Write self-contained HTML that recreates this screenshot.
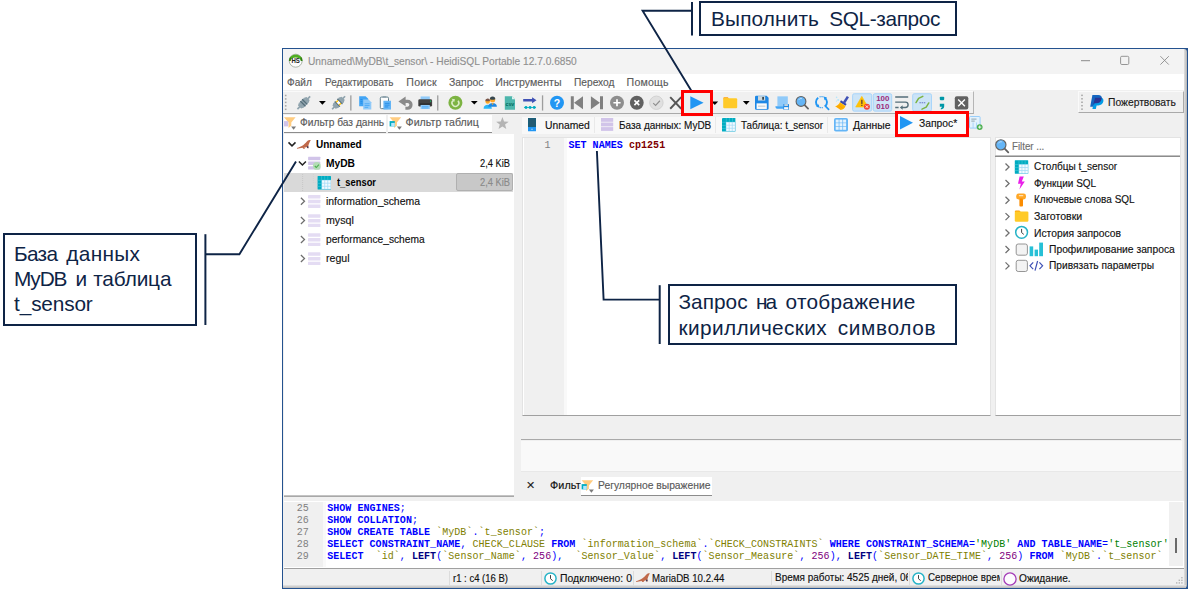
<!DOCTYPE html>
<html lang="ru"><head><meta charset="utf-8"><title>HeidiSQL</title>
<style>
html,body{margin:0;padding:0;background:#fff;}
body{width:1188px;height:589px;position:relative;overflow:hidden;font-family:"Liberation Sans",sans-serif;}
.b,.t,.i,.g{position:absolute;box-sizing:border-box;}
.g{left:0;top:0;width:0;height:0;}
.t{white-space:pre;margin:0;padding:0;font-weight:normal;transform-origin:0 50%;}
.i{overflow:visible;}
.window .r{-webkit-text-stroke:0.15px currentColor;}
</style></head>
<body>
<div class="g window">
<div class="b frame" style="left:282px;top:48px;width:906px;height:541px;background:#24528f;"></div>
<div class="b client" style="left:283px;top:49px;width:901px;height:538.5px;background:#f0f0f0;"></div>
<div class="b shadow" style="left:1184px;top:49px;width:3px;height:538.5px;background:linear-gradient(90deg,#e0e0e0,#b4b4b4);border-radius:0 3px 3px 0;"></div>
<div class="b shadow" style="left:283px;top:585px;width:903px;height:2.5px;background:linear-gradient(180deg,#e6e6e6,#b8b8b8);"></div>
<div class="g titlebar">
<div class="b" style="left:283px;top:49px;width:901px;height:25px;background:#f3f3f3;border-radius:0 3px 0 0;"></div>
<svg class="i app" style="left:287.5px;top:52.5px" width="16" height="17" viewBox="287.5 52.5 16 17"><circle cx="295.2" cy="60.2" r="6.5" fill="#fdfdfd" stroke="#a3ada0" stroke-width="0.9"/><path d="M288.5 60.6A6.7 6.7 0 0 1 301.9 60.6L300.4 60.4A5.4 4.6 0 0 0 290.0 60.4Z" fill="#4fae1f"/><path d="M288.5 60.6A6.7 6.7 0 0 1 289.6 56.6L290.6 57.8A5.4 4.6 0 0 0 290.0 60.4Z" fill="#2f7d12"/><path d="M301.9 60.6A6.7 6.7 0 0 0 300.8 56.6L299.8 57.8A5.4 4.6 0 0 1 300.4 60.4Z" fill="#2f7d12"/><text x="295.2" y="62.8" font-size="6.6" font-weight="bold" text-anchor="middle" fill="#222" font-family="Liberation Sans,sans-serif" textLength="8.4" lengthAdjust="spacingAndGlyphs">HS</text></svg>
<span class="t r" style="left:307.80px;top:55.00px;font-size:10.9px;line-height:13px;color:#909090;transform:scaleX(0.9340);">Unnamed\MyDB\t_sensor\ - HeidiSQL Portable 12.7.0.6850</span>
<svg class="i winbtns" style="left:1075px;top:52px" width="100" height="18" viewBox="1075 52 100 18"><path d="M1081 60.7H1090" stroke="#8a8a8a" stroke-width="1" fill="none"/><rect x="1120.6" y="56.3" width="8.2" height="8.2" rx="1.2" stroke="#8a8a8a" stroke-width="0.9" fill="none"/><path d="M1160.4 56.2L1168.8 64.6M1168.8 56.2L1160.4 64.6" stroke="#8a8a8a" stroke-width="0.9" fill="none"/></svg>
</div>
<div class="g menubar">
<div class="b" style="left:283px;top:74px;width:901px;height:16.3px;background:#ffffff;"></div>
<span class="t r" style="left:287.40px;top:76.00px;font-size:10.6px;line-height:13px;color:#5c5c5c;transform:scaleX(0.9555);">Файл</span>
<span class="t r" style="left:325.20px;top:76.00px;font-size:10.6px;line-height:13px;color:#5c5c5c;transform:scaleX(0.9341);">Редактировать</span>
<span class="t r" style="left:406.30px;top:76.00px;font-size:10.6px;line-height:13px;color:#5c5c5c;letter-spacing:0.232px;">Поиск</span>
<span class="t r" style="left:448.70px;top:76.00px;font-size:10.6px;line-height:13px;color:#5c5c5c;transform:scaleX(0.9850);">Запрос</span>
<span class="t r" style="left:495.30px;top:76.00px;font-size:10.6px;line-height:13px;color:#5c5c5c;letter-spacing:0.020px;">Инструменты</span>
<span class="t r" style="left:573.50px;top:76.00px;font-size:10.6px;line-height:13px;color:#5c5c5c;transform:scaleX(0.9620);">Переход</span>
<span class="t r" style="left:626.60px;top:76.00px;font-size:10.6px;line-height:13px;color:#5c5c5c;letter-spacing:0.192px;">Помощь</span>
</div>
<div class="g toolbar">
<div class="b" style="left:283px;top:90.5px;width:690.5px;height:23.5px;background:#f0f0f0;border-bottom:1px solid #a9a9a9;border-right:1px solid #b5b5b5;border-top:1px solid #fafafa;"></div>
<svg class="i tbicons" style="left:284px;top:91.5px" width="689" height="22" viewBox="284 91.5 689 22"><g transform="translate(0 -0.35)"><rect x="284.9" y="94.60" width="1.6" height="1.5" fill="#a6a6a6"/><rect x="284.9" y="98.05" width="1.6" height="1.5" fill="#a6a6a6"/><rect x="284.9" y="101.50" width="1.6" height="1.5" fill="#a6a6a6"/><rect x="284.9" y="104.95" width="1.6" height="1.5" fill="#a6a6a6"/><rect x="284.9" y="108.40" width="1.6" height="1.5" fill="#a6a6a6"/><g transform="translate(303.8 102.6) rotate(45)"><rect x="-0.85" y="-9" width="1.7" height="18" fill="#90a4ae"/><path d="M-2.2 -6L2.2 -6L3.6 -3.2H-3.6Z" fill="#90a4ae"/><path d="M-2.2 6L2.2 6L3.6 3.2H-3.6Z" fill="#90a4ae"/><rect x="-3.3" y="-3.4" width="6.6" height="6.8" rx="0.8" fill="#90a4ae"/><rect x="-3.6" y="-1.9" width="7.2" height="1.3" fill="#546e7a"/><rect x="-3.6" y="0.6" width="7.2" height="1.3" fill="#546e7a"/></g><path d="M319.00 100.85H325.80L322.40 104.55Z" fill="#000"/><g transform="translate(338.6 102.6) rotate(45)"><rect x="-0.85" y="-9.2" width="1.7" height="4.4" fill="#90a4ae"/><rect x="-0.85" y="4.8" width="1.7" height="4.4" fill="#90a4ae"/><path d="M-2.2 -6.4L2.2 -6.4L3.6 -3.6H-3.6Z" fill="#90a4ae"/><path d="M-2.2 6.4L2.2 6.4L3.6 3.6H-3.6Z" fill="#90a4ae"/><rect x="-3.3" y="-4" width="6.6" height="2.4" fill="#90a4ae"/><rect x="-3.3" y="1.6" width="6.6" height="2.4" fill="#90a4ae"/><rect x="-3.6" y="-2.3" width="7.2" height="1.1" fill="#546e7a"/><rect x="-3.6" y="1.2" width="7.2" height="1.1" fill="#546e7a"/><rect x="-2.7" y="-1.2" width="1.5" height="2.4" fill="#ffc107"/><rect x="1.2" y="-1.2" width="1.5" height="2.4" fill="#ffc107"/><rect x="-1.2" y="-1.2" width="2.4" height="2.4" fill="#fff"/></g><rect x="350.20" y="95.2" width="1.3" height="15.2" fill="#9d9d9d"/><path d="M359.2 96h6.4l2.6 2.6v7.6h-9z" fill="#42a5f5"/><path d="M363.2 99.4h5.4l2.7 2.7v7.3h-8.1z" fill="#90caf9"/><path d="M364.6 103.6h5M364.6 105.4h5M364.6 107.2h3.6" stroke="#42a5f5" stroke-width="0.8"/><path d="M360.4 99.4h2M360.4 101.2h2M360.4 103h2" stroke="#1e88e5" stroke-width="0.8"/><rect x="380.3" y="96.9" width="8.2" height="11.6" rx="1.2" fill="#fdfdfd" stroke="#607d8b" stroke-width="1"/><rect x="382.6" y="95.9" width="3.6" height="1.8" rx="0.6" fill="#90a4ae"/><rect x="383.4" y="100.6" width="7.6" height="8.8" fill="#64b5f6"/><path d="M384.8 103.2h4.8M384.8 105h4.8M384.8 106.8h3.4" stroke="#1e88e5" stroke-width="0.8"/><path d="M398.4 101.3L405.6 96.4V106.2z" fill="#8a8a8a"/><path d="M404.6 101.3h3a3.4 3.4 0 0 1 0 6.8h-2.2" stroke="#8a8a8a" stroke-width="3.2" fill="none"/><rect x="420.6" y="96.3" width="9.2" height="3.4" fill="#90caf9"/><rect x="418.3" y="99.2" width="13.8" height="7.2" rx="1.4" fill="#424242"/><rect x="420.6" y="104.6" width="9.2" height="4.3" fill="#90caf9"/><rect x="419.6" y="103.4" width="11.2" height="1.2" fill="#242424"/><path d="M422 106.4h6.4M422 107.8h6.4" stroke="#42a5f5" stroke-width="0.6"/><circle cx="430.6" cy="100.9" r="0.6" fill="#00e676"/><rect x="437.10" y="95.2" width="1.3" height="15.2" fill="#9d9d9d"/><circle cx="455.4" cy="102.6" r="7" fill="#7cb342" /><path d="M453 100.4A3.4 3.4 0 1 0 458 100.6" fill="none" stroke="#dcedc8" stroke-width="1.5"/><path d="M451.6 98.6l3.4 0.4l-0.9 3z" fill="#dcedc8"/><path d="M470.90 100.75H477.70L474.30 104.45Z" fill="#000"/><circle cx="487.7" cy="101.3" r="2.3" fill="#ffa726"/><path d="M485.3 100.8a2.4 2.4 0 0 1 4.8 -0.3a3.6 1.8 0 0 1 -4.8 0.3z" fill="#795548"/><path d="M483.6 108.5c0-2.6 1.8-3.8 4.1-3.8s4.1 1.2 4.1 3.8z" fill="#29b6f6"/><circle cx="492.6" cy="99.6" r="2.6" fill="#ffa726"/><path d="M489.9 99.2a2.7 2.7 0 0 1 5.4 -0.2a4 2 0 0 1 -5.4 0.2z" fill="#37474f"/><path d="M488.2 106.7c0-2.6 2-3.8 4.4-3.8s4.3 1.2 4.3 3.8z" fill="#1e88e5"/><path d="M491.4 103l1.2 1.8l1.2 -1.8z" fill="#ffa726"/><path d="M504.8 96h7.2l3 3v10.6h-10.2z" fill="#4db6ac"/><path d="M512 96l3 3h-3z" fill="#e0f2f1"/><text x="509.9" y="105.9" font-size="5.2" font-weight="bold" fill="#00695c" text-anchor="middle" font-family="Liberation Sans,sans-serif">csv</text><path d="M523.2 98.9h8.9v-1.7l4.4 2.9l-4.4 2.9v-1.7h-8.9z" fill="#3f51b5"/><circle cx="526" cy="107.3" r="1.45" fill="#00acc1"/><circle cx="530.1" cy="107.3" r="1.45" fill="#00acc1"/><circle cx="534.2" cy="107.3" r="1.45" fill="#00acc1"/><rect x="524" y="106.9" width="12" height="0.8" fill="#00acc1"/><rect x="541.90" y="95.2" width="1.3" height="15.2" fill="#9d9d9d"/><circle cx="557" cy="102.6" r="7" fill="#2196f3" /><text x="557" y="106.6" font-size="10.5" font-weight="bold" fill="#fff" text-anchor="middle" font-family="Liberation Sans,sans-serif">?</text><path d="M570.8 96h3v13.2h-3zM583 96v13.2L574 102.6z" fill="#808080"/><path d="M600 96h3v13.2h-3zM590.9 96v13.2L599.9 102.6z" fill="#808080"/><circle cx="617" cy="102.6" r="7" fill="#8e8e8e" /><path d="M613.4 102.6h7.2M617 99v7.2" stroke="#fff" stroke-width="1.7"/><circle cx="636.8" cy="102.6" r="6.9" fill="#616161" /><path d="M634.4 100.2l4.8 4.8M639.2 100.2l-4.8 4.8" stroke="#fff" stroke-width="1.6"/><circle cx="656.4" cy="102.6" r="6.7" fill="#e0e0e0" stroke="#cfcfcf" stroke-width="0.9"/><path d="M653.2 102.9l2.4 2.3l4.3 -4.6" stroke="#8f8f8f" stroke-width="1.1" fill="none"/><path d="M670.2 97l11 11.6M681.2 97l-11 11.6" stroke="#555" stroke-width="1.9" fill="none"/><path d="M690.3 96L703.6 102.6L690.3 109.2Z" fill="#2196f3"/><path d="M711.40 101.25H718.20L714.80 104.95Z" fill="#000"/><path d="M723.2 98.4a1.2 1.2 0 0 1 1.2 -1.2h3.4l1.4 1.4h-6z" fill="#ffa000"/><rect x="723.2" y="98.2" width="14" height="9.9" rx="1.2" fill="#ffca28"/><path d="M742.90 100.95H749.70L746.30 104.65Z" fill="#000"/><path d="M756.2 95.7h10.4l2 2v10.7a1.2 1.2 0 0 1 -1.2 1.2h-11.2a1.2 1.2 0 0 1 -1.2 -1.2v-11.5a1.2 1.2 0 0 1 1.2 -1.2z" fill="#1e88e5"/><rect x="758" y="96" width="7.2" height="4.4" fill="#cfd8dc"/><rect x="762.2" y="96.8" width="1.8" height="2.8" fill="#37474f"/><rect x="756.6" y="103.2" width="10.2" height="5.6" fill="#fafafa"/><rect x="758" y="105.3" width="7.4" height="1.6" fill="#cfd8dc"/><rect x="777.4" y="96.2" width="10.4" height="10" fill="#90caf9"/><path d="M775.4 106h11v2.6h-8.4a2.6 2.6 0 0 1 -2.6 -2.6z" fill="#42a5f5"/><rect x="783.4" y="103.8" width="5.6" height="5.8" rx="0.6" fill="#1e88e5"/><rect x="784.3" y="104" width="3.6" height="1.8" fill="#cfd8dc"/><rect x="784.1" y="107" width="4.2" height="2.3" fill="#fafafa"/><path d="M804.40 104.70L808.10 108.40" stroke="#616161" stroke-width="1.70" stroke-linecap="round"/><circle cx="801.00" cy="101.30" r="4.90" fill="#64b5f6" stroke="#616161" stroke-width="1.10"/><path d="M798.60 99.90A2.80 2.80 0 0 1 802.00 98.40" stroke="#bbdefb" stroke-width="0.90" fill="none"/><path d="M818.2 97.6A5.4 5.4 0 0 0 818 106.2M825 97.8A5.4 5.4 0 0 1 825.2 106" fill="none" stroke="#2196f3" stroke-width="1.9"/><path d="M819.6 96.8A5.4 5.4 0 0 1 823.4 96.8M819.8 107.2A5.4 5.4 0 0 0 823.4 107.2" fill="none" stroke="#2196f3" stroke-width="1.2" stroke-dasharray="1 0.9"/><path d="M825.2 105.8l3.4 3.4" stroke="#2196f3" stroke-width="1.7" stroke-linecap="round"/><path d="M823.6 96.4l3.4 1l-2.4 2.6z" fill="#2196f3"/><path d="M819.6 107.6l-3.4 -1l2.4 -2.6z" fill="#2196f3"/><path d="M846.8 95.8l2.2 1.4l-3.8 6l-2.2 -1.4z" fill="#3f51b5"/><path d="M841 100.2l5.6 3.6l-1.1 1.8l-5.6 -3.6z" fill="#3949ab"/><path d="M839.9 102.2l5.6 3.6c-0.6 2.2 -2.4 3.6 -4.8 4l-5.6 -3.6c2.4 -0.6 3.8 -1.9 4.8 -4z" fill="#ffb300"/><path d="M838.4 105.2l4.4 2.8M837 106.2l3.6 2.4" stroke="#ff8f00" stroke-width="0.6"/><circle cx="836.6" cy="97.2" r="0.8" fill="#b3e5fc"/><circle cx="838.2" cy="99.8" r="1" fill="#b3e5fc"/><circle cx="836.4" cy="100.9" r="0.6" fill="#b3e5fc"/><rect x="852.6" y="93.6" width="19.10" height="17.4" rx="1.6" fill="#cce4f7" stroke="#a3d3fa" stroke-width="0.9"/><rect x="873.3" y="93.6" width="18.40" height="17.4" rx="1.6" fill="#cce4f7" stroke="#a3d3fa" stroke-width="0.9"/><rect x="912.7" y="93.6" width="18.80" height="17.4" rx="1.6" fill="#cce4f7" stroke="#a3d3fa" stroke-width="0.9"/><path d="M861.8 96.2l6.1 10.7h-12.2z" fill="#ffc107" stroke="#ffc107" stroke-width="0.6" stroke-linejoin="round"/><rect x="861.2" y="99.6" width="1.3" height="4.2" fill="#5d4037"/><rect x="861.2" y="104.6" width="1.3" height="1.2" fill="#5d4037"/><circle cx="866.9" cy="106.5" r="3" fill="#f44336"/><path d="M865.7 105.3l2.4 2.4M868.1 105.3l-2.4 2.4" stroke="#fff" stroke-width="0.9"/><text x="882.8" y="101.3" font-size="7.2" font-weight="bold" fill="#9c2a7a" text-anchor="middle" font-family="Liberation Sans,sans-serif" textLength="13.2" lengthAdjust="spacingAndGlyphs">100</text><text x="882.8" y="108.8" font-size="7.2" font-weight="bold" fill="#9c2a7a" text-anchor="middle" font-family="Liberation Sans,sans-serif" textLength="13.2" lengthAdjust="spacingAndGlyphs">010</text><path d="M895.2 96.9h13M895.2 102h10.2a2.7 2.7 0 0 1 0 5.4h-3.6M895.2 107.3h3.4" stroke="#546e7a" stroke-width="1.4" fill="none"/><path d="M902.6 105.2v4.3l-2.8 -2.15z" fill="#546e7a"/><path d="M916 102.4l2.6 -4.2l4.2 -2M928.8 102.8l-2.6 4.2l-4.2 2" stroke="#7cb342" stroke-width="1.5" fill="none" stroke-linecap="round" stroke-linejoin="round"/><path d="M919.4 102.6h6" stroke="#5c6bc0" stroke-width="0.9" stroke-dasharray="1.5 0.7"/><rect x="939.8" y="96.6" width="4.4" height="3.4" rx="0.8" fill="#0097a7"/><path d="M939.8 103.6h4.4v2.6c0 1.8 -1.2 2.8 -3.4 3.2v-1.4c0.8 -0.3 1.2 -0.7 1.2 -1.4h-2.2z" fill="#0097a7"/><rect x="954.8" y="96" width="13.5" height="13.4" rx="2" fill="#616161"/><path d="M958.2 99.4l6.7 6.7M964.9 99.4l-6.7 6.7" stroke="#fff" stroke-width="1.4"/></g></svg>
<div class="b" style="left:1077.5px;top:90.5px;width:106.5px;height:22.5px;background:#f0f0f0;border-bottom:1px solid #a9a9a9;border-right:1px solid #a9a9a9;border-top:1px solid #fafafa;border-left:1px solid #fafafa;"></div>
<svg class="i grip" style="left:1081px;top:94px" width="3" height="18" viewBox="1081 94 3 18"><rect x="1081.2" y="94.60" width="1.6" height="1.5" fill="#a6a6a6"/><rect x="1081.2" y="98.05" width="1.6" height="1.5" fill="#a6a6a6"/><rect x="1081.2" y="101.50" width="1.6" height="1.5" fill="#a6a6a6"/><rect x="1081.2" y="104.95" width="1.6" height="1.5" fill="#a6a6a6"/><rect x="1081.2" y="108.40" width="1.6" height="1.5" fill="#a6a6a6"/></svg>
<svg class="i paypal" style="left:1090px;top:94.5px" width="14" height="14.5" viewBox="1090 94.5 14 14.5"><path d="M1092.4 94.5h5.8c2.6 0 4 1.6 3.6 3.9c-0.5 2.9 -2.5 4.3 -5.3 4.3h-1.9l-0.8 3.6h-3.6z" fill="#1565c0"/><path d="M1095 97.1h5.2c2.4 0 3.6 1.5 3.2 3.7c-0.5 2.7 -2.4 4.1 -5 4.1h-1.8l-0.8 3.6h-3.4z" fill="#039be5"/><path d="M1095 97.1h5.2c0.6 0 1.2 0.1 1.6 0.3c-0.2 0.4 -0.1 0.8 -0.2 1.1c-0.5 2.8 -2.4 4.2 -5.2 4.2h-1.9l-0.3 1.2h-1z" fill="#283593"/></svg>
<span class="t r" style="left:1107.80px;top:96.00px;font-size:10.8px;line-height:13px;color:#1a1a1a;transform:scaleX(0.9539);">Пожертвовать</span>
</div>
<div class="g tabs">
<div class="b" style="left:283.5px;top:114.5px;width:102px;height:18.5px;background:#fff;border-bottom:1px solid #8c8c8c;"></div>
<svg class="i funnel" style="left:284px;top:116px" width="13" height="15" viewBox="284 116 13 15"><path d="M284 117.2h11.6l-4.3 5.4v3.2l-2.8 2.2v-5.4z" fill="#ffcc80"/><rect x="284" y="121.1" width="4.2" height="5.3" fill="#d1c4e9"/><path d="M291.1 126.4h5l-2.5 3.4z" fill="#7a7a7a"/></svg>
<span class="t r" style="left:299.80px;top:116.00px;font-size:10.6px;line-height:13px;color:#5a5a5a;transform:scaleX(0.9648);">Фильтр баз даннь</span>
<div class="b" style="left:388px;top:114.5px;width:103.5px;height:18.5px;background:#fff;border-bottom:1px solid #8c8c8c;"></div>
<svg class="i funnel" style="left:388.5px;top:116px" width="14" height="15" viewBox="388.5 116 14 15"><path d="M389.1 117.2h11.6l-4.3 5.4v3.2l-2.8 2.2v-5.4z" fill="#ffcc80"/><path d="M389.1 121.1h5.2v5.3h-5.2z" fill="#00acc1"/><rect x="390.7" y="122.9" width="3.6" height="3.5" fill="#b3e5fc"/><path d="M396.4 126.4h5l-2.5 3.4z" fill="#7a7a7a"/></svg>
<span class="t r" style="left:405.60px;top:116.00px;font-size:10.6px;line-height:13px;color:#5a5a5a;letter-spacing:0.020px;">Фильтр таблиц</span>
<svg class="i star" style="left:494.5px;top:116.3px" width="15" height="15" viewBox="494.5 116.3 15 15"><polygon points="501.90,117.40 503.55,121.73 508.18,121.96 504.56,124.87 505.78,129.34 501.90,126.80 498.02,129.34 499.24,124.87 495.62,121.96 500.25,121.73" fill="#b4b4b4"/></svg>
<div class="b" style="left:521.5px;top:116.5px;width:447.5px;height:17.5px;background:#f8f8f8;"></div>
<div class="b" style="left:594px;top:117px;width:1px;height:16px;background:#e9e9e9;"></div>
<div class="b" style="left:715px;top:117px;width:1px;height:16px;background:#e9e9e9;"></div>
<div class="b" style="left:826.5px;top:117px;width:1px;height:16px;background:#e9e9e9;"></div>
<svg class="i host" style="left:528.4px;top:117.7px" width="9" height="14" viewBox="528.4 117.7 9 14"><rect x="528.4" y="117.7" width="8" height="13.3" rx="0.6" fill="#2196f3"/><rect x="528.4" y="117.7" width="8" height="9" fill="#1a5f7a"/><rect x="529.5" y="118.7" width="5.8" height="7.2" fill="#245b73"/><rect x="531.8" y="128.4" width="1.2" height="1.2" fill="#bbdefb"/></svg>
<span class="t r" style="left:544.70px;top:119.00px;font-size:10.8px;line-height:13px;color:#111;transform:scaleX(0.9567);">Unnamed</span>
<svg class="i db" style="left:601.1px;top:118px" width="14" height="13" viewBox="601.1 118 14 13"><rect x="601.1" y="118.00" width="12.2" height="3.8" fill="#d1c4e9"/><rect x="601.1" y="122.55" width="12.2" height="3.8" fill="#d1c4e9"/><rect x="601.1" y="127.10" width="12.2" height="3.8" fill="#d1c4e9"/></svg>
<span class="t r" style="left:618.70px;top:119.00px;font-size:10.8px;line-height:13px;color:#111;transform:scaleX(0.9255);">База данных: MyDB</span>
<svg class="i tbl" style="left:721.5px;top:118px" width="13.4" height="13.4" viewBox="721.5 118 13.4 13.4"><rect x="721.5" y="118" width="13.4" height="13.4" rx="0.5" fill="#00acc1"/><rect x="725.40" y="121.90" width="9.50" height="9.50" fill="#a6dcf7"/><rect x="726.00" y="122.50" width="2.25" height="2.25" fill="#f3fbff"/><rect x="726.00" y="125.55" width="2.25" height="2.25" fill="#f3fbff"/><rect x="726.00" y="128.60" width="2.25" height="2.25" fill="#f3fbff"/><rect x="729.05" y="122.50" width="2.25" height="2.25" fill="#f3fbff"/><rect x="729.05" y="125.55" width="2.25" height="2.25" fill="#f3fbff"/><rect x="729.05" y="128.60" width="2.25" height="2.25" fill="#f3fbff"/><rect x="732.10" y="122.50" width="2.25" height="2.25" fill="#f3fbff"/><rect x="732.10" y="125.55" width="2.25" height="2.25" fill="#f3fbff"/><rect x="732.10" y="128.60" width="2.25" height="2.25" fill="#f3fbff"/><rect x="725.40" y="118" width="0.55" height="3.90" fill="#4dc6d6"/><rect x="721.5" y="121.90" width="3.90" height="0.55" fill="#4dc6d6"/><rect x="728.45" y="118" width="0.55" height="3.90" fill="#4dc6d6"/><rect x="721.5" y="124.95" width="3.90" height="0.55" fill="#4dc6d6"/><rect x="731.50" y="118" width="0.55" height="3.90" fill="#4dc6d6"/><rect x="721.5" y="128.00" width="3.90" height="0.55" fill="#4dc6d6"/></svg>
<span class="t r" style="left:741.00px;top:119.00px;font-size:10.8px;line-height:13px;color:#111;transform:scaleX(0.9134);">Таблица: t_sensor</span>
<svg class="i grid" style="left:833.5px;top:118px" width="14" height="14" viewBox="833.5 118 14 14"><rect x="833.5" y="118" width="14" height="13.6" rx="1.8" fill="#64b5f6"/><rect x="835.20" y="119.60" width="3" height="3" fill="#e3f2fd"/><rect x="835.20" y="123.20" width="3" height="3" fill="#e3f2fd"/><rect x="835.20" y="126.80" width="3" height="3" fill="#e3f2fd"/><rect x="838.90" y="119.60" width="3" height="3" fill="#e3f2fd"/><rect x="838.90" y="123.20" width="3" height="3" fill="#e3f2fd"/><rect x="838.90" y="126.80" width="3" height="3" fill="#e3f2fd"/><rect x="842.60" y="119.60" width="3" height="3" fill="#e3f2fd"/><rect x="842.60" y="123.20" width="3" height="3" fill="#e3f2fd"/><rect x="842.60" y="126.80" width="3" height="3" fill="#e3f2fd"/></svg>
<span class="t r" style="left:852.50px;top:119.00px;font-size:10.8px;line-height:13px;color:#111;transform:scaleX(0.9611);">Данные</span>
<div class="b" style="left:897px;top:114px;width:69px;height:21px;background:#fbfbfb;"></div>
<svg class="i play" style="left:900.2px;top:116px" width="13" height="13.4" viewBox="900.2 116 13 13.4"><path d="M900.2 116L913.2 122.7L900.2 129.4Z" fill="#2196f3"/></svg>
<span class="t r" style="left:919.30px;top:117.00px;font-size:10.8px;line-height:13px;color:#111;transform:scaleX(0.9551);">Запрос*</span>
<svg class="i newtab" style="left:968.7px;top:116.1px" width="14.5" height="14.5" viewBox="968.7 116.1 14.5 14.5"><rect x="969.2" y="116.6" width="10.6" height="11.6" rx="0.8" fill="#e3f2fd" stroke="#90caf9" stroke-width="0.9"/><path d="M971.0 119.2h5.2M971.0 121.2h3.4" stroke="#90a4ae" stroke-width="1"/><path d="M972.8 122.6v5.4M976.2 122.6v5.4" stroke="#90caf9" stroke-width="0.7"/><circle cx="979.4" cy="127.2" r="2.9" fill="#4caf50"/><path d="M977.8 127.2h3.2M979.4 125.6v3.2" stroke="#fff" stroke-width="0.9"/></svg>
</div>
<div class="g dbtree">
<div class="b" style="left:283.5px;top:134px;width:230.5px;height:361.5px;background:#fff;"></div>
<div class="b" style="left:283.5px;top:173px;width:229.5px;height:18.5px;background:#d9d9d9;"></div>
<div class="b" style="left:456px;top:173px;width:57px;height:18px;background:#c8c8c8;border:1px solid #b0b0b0;border-radius:2px;"></div>
<svg class="i treeicons" style="left:284px;top:136px" width="232" height="132" viewBox="284 136 232 132"><path d="M288.5 142.4L292 145.9L295.5 142.4" stroke="#222" stroke-width="1.5" fill="none"/><g transform="translate(296.9 139.7) scale(1.0)"><path d="M0 8.3C2 7.6 4.5 6.6 6.5 5.2C8.3 4 9.6 2.2 11 0.9C11.8 0.2 13 0 13.9 0.6L13.2 1.5C12.6 2.6 12.2 4 11.6 5.4C11.3 6.3 11.4 7.4 11.8 8.6L10.4 8.6L9.8 7.2C9 7.6 8.2 7.8 7.4 7.9L8.2 9L6.4 9L5.6 8C3.8 8.4 1.8 8.8 0.2 9Z" fill="#c0694a"/><path d="M10 7.1L11.3 6.4L11.5 8.1L10.5 8.4Z" fill="#1f305f"/></g><path d="M298.9 161.5L302.4 165.0L305.9 161.5" stroke="#222" stroke-width="1.5" fill="none"/><rect x="308.1" y="156.80" width="12.2" height="3.4" rx="0.4" fill="#d1c4e9" opacity="1"/><rect x="308.1" y="161.50" width="12.2" height="3.4" rx="0.4" fill="#d1c4e9" opacity="1"/><rect x="308.1" y="166.20" width="12.2" height="3.4" rx="0.4" fill="#d1c4e9" opacity="1"/><circle cx="316.8" cy="165.9" r="3.9" fill="#b4dcb6"/><path d="M314.8 166l1.5 1.5l2.6 -2.9" stroke="#4caf50" stroke-width="1.1" fill="none"/><path d="M302.6 174v17" stroke="#bdbdbd" stroke-width="0.8" stroke-dasharray="0.8 1.2"/><path d="M313.4 174v8.5h3.5" stroke="#cfcfcf" stroke-width="0.8" stroke-dasharray="0.8 1.2" fill="none"/><rect x="317.6" y="176" width="13.4" height="13.4" rx="0.5" fill="#00acc1"/><rect x="321.50" y="179.90" width="9.50" height="9.50" fill="#a6dcf7"/><rect x="322.10" y="180.50" width="2.25" height="2.25" fill="#f3fbff"/><rect x="322.10" y="183.55" width="2.25" height="2.25" fill="#f3fbff"/><rect x="322.10" y="186.60" width="2.25" height="2.25" fill="#f3fbff"/><rect x="325.15" y="180.50" width="2.25" height="2.25" fill="#f3fbff"/><rect x="325.15" y="183.55" width="2.25" height="2.25" fill="#f3fbff"/><rect x="325.15" y="186.60" width="2.25" height="2.25" fill="#f3fbff"/><rect x="328.20" y="180.50" width="2.25" height="2.25" fill="#f3fbff"/><rect x="328.20" y="183.55" width="2.25" height="2.25" fill="#f3fbff"/><rect x="328.20" y="186.60" width="2.25" height="2.25" fill="#f3fbff"/><rect x="321.50" y="176" width="0.55" height="3.90" fill="#4dc6d6"/><rect x="317.6" y="179.90" width="3.90" height="0.55" fill="#4dc6d6"/><rect x="324.55" y="176" width="0.55" height="3.90" fill="#4dc6d6"/><rect x="317.6" y="182.95" width="3.90" height="0.55" fill="#4dc6d6"/><rect x="327.60" y="176" width="0.55" height="3.90" fill="#4dc6d6"/><rect x="317.6" y="186.00" width="3.90" height="0.55" fill="#4dc6d6"/><path d="M300.9 197.8L304.5 201.3L300.9 204.8" stroke="#6e6e6e" stroke-width="1.25" fill="none"/><rect x="308" y="195.10" width="12.4" height="3.4" rx="0.4" fill="#e4dcf3" opacity="1"/><rect x="308" y="199.80" width="12.4" height="3.4" rx="0.4" fill="#e4dcf3" opacity="1"/><rect x="308" y="204.50" width="12.4" height="3.4" rx="0.4" fill="#e4dcf3" opacity="1"/><path d="M300.9 217.0L304.5 220.5L300.9 224.0" stroke="#6e6e6e" stroke-width="1.25" fill="none"/><rect x="308" y="214.30" width="12.4" height="3.4" rx="0.4" fill="#e4dcf3" opacity="1"/><rect x="308" y="219.00" width="12.4" height="3.4" rx="0.4" fill="#e4dcf3" opacity="1"/><rect x="308" y="223.70" width="12.4" height="3.4" rx="0.4" fill="#e4dcf3" opacity="1"/><path d="M300.9 236.0L304.5 239.5L300.9 243.0" stroke="#6e6e6e" stroke-width="1.25" fill="none"/><rect x="308" y="233.30" width="12.4" height="3.4" rx="0.4" fill="#e4dcf3" opacity="1"/><rect x="308" y="238.00" width="12.4" height="3.4" rx="0.4" fill="#e4dcf3" opacity="1"/><rect x="308" y="242.70" width="12.4" height="3.4" rx="0.4" fill="#e4dcf3" opacity="1"/><path d="M300.9 255.0L304.5 258.5L300.9 262.0" stroke="#6e6e6e" stroke-width="1.25" fill="none"/><rect x="308" y="252.30" width="12.4" height="3.4" rx="0.4" fill="#e4dcf3" opacity="1"/><rect x="308" y="257.00" width="12.4" height="3.4" rx="0.4" fill="#e4dcf3" opacity="1"/><rect x="308" y="261.70" width="12.4" height="3.4" rx="0.4" fill="#e4dcf3" opacity="1"/></svg>
<span class="t" style="left:316.40px;top:138.00px;font-size:10.8px;line-height:13px;color:#000;transform:scaleX(0.9267);font-weight:bold;">Unnamed</span>
<span class="t" style="left:326.20px;top:157.00px;font-size:10.8px;line-height:13px;color:#000;transform:scaleX(0.9476);font-weight:bold;">MyDB</span>
<span class="t r" style="left:480.00px;top:157.00px;font-size:10.8px;line-height:13px;color:#111;transform:scaleX(0.8615);">2,4 KiB</span>
<span class="t" style="left:337.30px;top:176.00px;font-size:10.8px;line-height:13px;color:#000;transform:scaleX(0.8663);font-weight:bold;">t_sensor</span>
<span class="t r" style="left:480.00px;top:176.00px;font-size:10.8px;line-height:13px;color:#8a8a8a;transform:scaleX(0.8615);">2,4 KiB</span>
<span class="t r" style="left:326.20px;top:195.00px;font-size:10.8px;line-height:13px;color:#111;transform:scaleX(0.9666);">information_schema</span>
<span class="t r" style="left:326.20px;top:214.00px;font-size:10.8px;line-height:13px;color:#111;transform:scaleX(0.9857);">mysql</span>
<span class="t r" style="left:326.20px;top:233.00px;font-size:10.8px;line-height:13px;color:#111;transform:scaleX(0.9440);">performance_schema</span>
<span class="t r" style="left:326.20px;top:252.00px;font-size:10.8px;line-height:13px;color:#111;transform:scaleX(0.9827);">regul</span>
</div>
<div class="g editor">
<div class="b" style="left:522px;top:136.5px;width:469px;height:279px;background:#fff;border:1px solid #e3e3e3;border-bottom:1px solid #a0a0a0;"></div>
<div class="b" style="left:523.5px;top:138px;width:40.5px;height:276.5px;background:#f0f0f0;"></div>
<div class="b" style="left:564px;top:138px;width:3px;height:276.5px;background:#f9f9f9;"></div>
<span class="t" style="left:544.40px;top:140.00px;font-size:10px;line-height:12px;color:#808080;font-family:'Liberation Mono',monospace;">1</span>
<span class="t" style="left:568.40px;top:140.00px;font-size:10px;line-height:12px;color:#0000ff;font-weight:bold;font-family:'Liberation Mono',monospace;letter-spacing:0.05px;">SET</span>
<span class="t" style="left:592.60px;top:140.00px;font-size:10px;line-height:12px;color:#0000ff;font-weight:bold;font-family:'Liberation Mono',monospace;letter-spacing:0.05px;">NAMES</span>
<span class="t" style="left:628.90px;top:140.00px;font-size:10px;line-height:12px;color:#800000;font-weight:bold;font-family:'Liberation Mono',monospace;letter-spacing:0.05px;">cp1251</span>
</div>
<div class="g helpers">
<div class="b" style="left:994.5px;top:136.5px;width:186.5px;height:279px;background:#fff;border:1px solid #e3e3e3;border-bottom:1px solid #a0a0a0;"></div>
<div class="b" style="left:995px;top:155px;width:185px;height:1px;background:#c0c0c0;"></div>
<div class="b" style="left:995px;top:156px;width:185px;height:1px;background:#8c8c8c;"></div>
<svg class="i search" style="left:995.3px;top:139px" width="14.5" height="14.5" viewBox="995.3 139 14.5 14.5"><path d="M1004.70 148.40L1008.57 152.27" stroke="#616161" stroke-width="1.78" stroke-linecap="round"/><circle cx="1001.15" cy="144.85" r="5.12" fill="#64b5f6" stroke="#616161" stroke-width="1.15"/><path d="M998.64 143.39A2.93 2.93 0 0 1 1002.20 141.82" stroke="#bbdefb" stroke-width="0.94" fill="none"/></svg>
<span class="t r" style="left:1012.20px;top:140.00px;font-size:10.8px;line-height:13px;color:#6d6d6d;transform:scaleX(0.8972);">Filter ...</span>
<span class="t r" style="left:1033.80px;top:160.00px;font-size:10.8px;line-height:13px;color:#111;transform:scaleX(0.9322);">Столбцы t_sensor</span>
<span class="t r" style="left:1033.80px;top:177.00px;font-size:10.8px;line-height:13px;color:#111;transform:scaleX(0.9261);">Функции SQL</span>
<span class="t r" style="left:1033.80px;top:193.00px;font-size:10.8px;line-height:13px;color:#111;transform:scaleX(0.9267);">Ключевые слова SQL</span>
<span class="t r" style="left:1033.80px;top:210.00px;font-size:10.8px;line-height:13px;color:#111;transform:scaleX(0.9771);">Заготовки</span>
<span class="t r" style="left:1033.80px;top:227.00px;font-size:10.8px;line-height:13px;color:#111;transform:scaleX(0.9564);">История запросов</span>
<span class="t r" style="left:1048.80px;top:243.00px;font-size:10.8px;line-height:13px;color:#111;transform:scaleX(0.9538);">Профилирование запроса</span>
<span class="t r" style="left:1048.80px;top:259.00px;font-size:10.8px;line-height:13px;color:#111;transform:scaleX(0.9441);">Привязать параметры</span>
<svg class="i helpericons" style="left:1000px;top:158px" width="46" height="116" viewBox="1000 158 46 116"><path d="M1005.5 163.5L1009.1 167.0L1005.5 170.5" stroke="#6e6e6e" stroke-width="1.25" fill="none"/><path d="M1005.5 180.0L1009.1 183.5L1005.5 187.0" stroke="#6e6e6e" stroke-width="1.25" fill="none"/><path d="M1005.5 196.7L1009.1 200.2L1005.5 203.7" stroke="#6e6e6e" stroke-width="1.25" fill="none"/><path d="M1005.5 213.1L1009.1 216.6L1005.5 220.1" stroke="#6e6e6e" stroke-width="1.25" fill="none"/><path d="M1005.5 229.5L1009.1 233.0L1005.5 236.5" stroke="#6e6e6e" stroke-width="1.25" fill="none"/><path d="M1005.5 246.0L1009.1 249.5L1005.5 253.0" stroke="#6e6e6e" stroke-width="1.25" fill="none"/><path d="M1005.5 262.4L1009.1 265.9L1005.5 269.4" stroke="#6e6e6e" stroke-width="1.25" fill="none"/><rect x="1014.8" y="160.3" width="13.4" height="13.4" rx="0.5" fill="#00acc1"/><rect x="1018.70" y="164.20" width="9.50" height="9.50" fill="#a6dcf7"/><rect x="1019.30" y="164.80" width="2.25" height="2.25" fill="#f3fbff"/><rect x="1019.30" y="167.85" width="2.25" height="2.25" fill="#f3fbff"/><rect x="1019.30" y="170.90" width="2.25" height="2.25" fill="#f3fbff"/><rect x="1022.35" y="164.80" width="2.25" height="2.25" fill="#f3fbff"/><rect x="1022.35" y="167.85" width="2.25" height="2.25" fill="#f3fbff"/><rect x="1022.35" y="170.90" width="2.25" height="2.25" fill="#f3fbff"/><rect x="1025.40" y="164.80" width="2.25" height="2.25" fill="#f3fbff"/><rect x="1025.40" y="167.85" width="2.25" height="2.25" fill="#f3fbff"/><rect x="1025.40" y="170.90" width="2.25" height="2.25" fill="#f3fbff"/><rect x="1018.70" y="160.3" width="0.55" height="3.90" fill="#4dc6d6"/><rect x="1014.8" y="164.20" width="3.90" height="0.55" fill="#4dc6d6"/><rect x="1021.75" y="160.3" width="0.55" height="3.90" fill="#4dc6d6"/><rect x="1014.8" y="167.25" width="3.90" height="0.55" fill="#4dc6d6"/><rect x="1024.80" y="160.3" width="0.55" height="3.90" fill="#4dc6d6"/><rect x="1014.8" y="170.30" width="3.90" height="0.55" fill="#4dc6d6"/><path d="M1019.6 176.6h4.2l-2 5h3l-5.4 8l1.4 -5.8h-2.8z" fill="#e91ee9"/><rect x="1016.2" y="193.6" width="9.8" height="5.8" rx="2.4" fill="#ffa726"/><rect x="1019.4" y="198.6" width="3.6" height="8" rx="1" fill="#fb8c00"/><rect x="1018.8" y="195" width="4.6" height="1.3" rx="0.65" fill="#ffe0b2"/><path d="M1014.8 211.8a1.2 1.2 0 0 1 1.2 -1.2h3.4l1.4 1.4h-6z" fill="#ffa000"/><rect x="1014.8" y="211.6" width="13.6" height="10.1" rx="1.2" fill="#ffca28"/><circle cx="1021.6" cy="232.3" r="5.9" fill="#fff" stroke="#26b3c7" stroke-width="1.5"/><path d="M1021.6 228.9V232.6l2.2 1.8" stroke="#444" stroke-width="1" fill="none"/><rect x="1016.2" y="244" width="11.2" height="11.2" rx="2" fill="#f3f3f3" stroke="#8a8a8a" stroke-width="0.9"/><rect x="1029.6" y="246.4" width="3.6" height="9.8" fill="#26c0d6"/><rect x="1034.6" y="249.6" width="3.4" height="6.6" fill="#26c0d6"/><rect x="1039.2" y="242.6" width="3.8" height="13.6" fill="#26c0d6"/><rect x="1016.2" y="260.3" width="11.2" height="11.2" rx="2" fill="#f3f3f3" stroke="#8a8a8a" stroke-width="0.9"/><path d="M1033.2 262.4l-3.2 3.4l3.2 3.4M1039.4 262.4l3.2 3.4l-3.2 3.4M1037.6 261l-2.6 9.6" stroke="#3f51b5" stroke-width="1.2" fill="none"/></svg>
</div>
<div class="g results">
<div class="b" style="left:521px;top:416px;width:660px;height:24px;background:#f0f0f0;border-bottom:1px solid #a9a9a9;"></div>
<div class="b" style="left:520.5px;top:440.5px;width:661.5px;height:31px;background:#f9f9f9;border-bottom:1px solid #e8e8e8;"></div>
<span class="t r" style="left:525.60px;top:479.00px;font-size:11px;line-height:13px;color:#222;">✕</span>
<span class="t r" style="left:550.00px;top:479.00px;font-size:10.8px;line-height:13px;color:#111;letter-spacing:0.081px;">Фильт</span>
<div class="b" style="left:580.5px;top:477px;width:131.5px;height:19px;background:#fff;border-bottom:1px solid #8c8c8c;"></div>
<svg class="i funnel" style="left:580.5px;top:479px" width="14" height="15" viewBox="580.5 479 14 15"><path d="M581.1 480.2h11.6l-4.3 5.4v3.2l-2.8 2.2v-5.4z" fill="#ffcc80"/><path d="M581.1 484.1h5.2v5.3h-5.2z" fill="#00acc1"/><rect x="582.7" y="485.9" width="3.6" height="3.5" fill="#b3e5fc"/><path d="M588.4 489.4h5l-2.5 3.4z" fill="#7a7a7a"/></svg>
<span class="t r" style="left:597.50px;top:479.00px;font-size:10.6px;line-height:13px;color:#5a5a5a;transform:scaleX(0.9737);">Регулярное выражение</span>
</div>
<div class="g log">
<div class="b" style="left:283.5px;top:495px;width:230.5px;height:1px;background:#c4c4c4;"></div>
<div class="b" style="left:283.5px;top:496px;width:230.5px;height:1px;background:#a8a8a8;"></div>
<div class="b" style="left:283.5px;top:500.5px;width:900px;height:68px;background:#fff;border-bottom:1px solid #a0a0a0;"></div>
<div class="b" style="left:283.5px;top:502px;width:39.5px;height:65px;background:#f0f0f0;"></div>
<div class="b" style="left:323px;top:502px;width:3px;height:65px;background:#f9f9f9;"></div>
<div class="b" style="left:1169px;top:502px;width:14px;height:64px;background:#f0f0f0;"></div>
<div class="b" style="left:1175px;top:537.5px;width:1.5px;height:15px;background:#6a6a6a;"></div>
<span class="t" style="left:296.80px;top:503.00px;font-size:10px;line-height:12px;color:#808080;font-family:'Liberation Mono',monospace;">25</span>
<span class="t" style="left:327.20px;top:503.00px;font-size:10px;line-height:12px;color:#0000ff;font-weight:bold;font-family:'Liberation Mono',monospace;letter-spacing:0.053px;">SHOW ENGINES</span>
<span class="t" style="left:399.85px;top:503.00px;font-size:10px;line-height:12px;color:#0000ff;font-family:'Liberation Mono',monospace;letter-spacing:0.053px;">;</span>
<span class="t" style="left:296.80px;top:515.00px;font-size:10px;line-height:12px;color:#808080;font-family:'Liberation Mono',monospace;">26</span>
<span class="t" style="left:327.20px;top:515.00px;font-size:10px;line-height:12px;color:#0000ff;font-weight:bold;font-family:'Liberation Mono',monospace;letter-spacing:0.053px;">SHOW COLLATION</span>
<span class="t" style="left:411.96px;top:515.00px;font-size:10px;line-height:12px;color:#0000ff;font-family:'Liberation Mono',monospace;letter-spacing:0.053px;">;</span>
<span class="t" style="left:296.80px;top:527.00px;font-size:10px;line-height:12px;color:#808080;font-family:'Liberation Mono',monospace;">27</span>
<span class="t" style="left:327.20px;top:527.00px;font-size:10px;line-height:12px;color:#0000ff;font-weight:bold;font-family:'Liberation Mono',monospace;letter-spacing:0.053px;">SHOW CREATE TABLE</span>
<span class="t" style="left:436.17px;top:527.00px;font-size:10px;line-height:12px;color:#808000;font-family:'Liberation Mono',monospace;letter-spacing:0.053px;">`MyDB`</span>
<span class="t" style="left:472.50px;top:527.00px;font-size:10px;line-height:12px;color:#0000ff;font-family:'Liberation Mono',monospace;letter-spacing:0.053px;">.</span>
<span class="t" style="left:478.55px;top:527.00px;font-size:10px;line-height:12px;color:#808000;font-family:'Liberation Mono',monospace;letter-spacing:0.053px;">`t_sensor`</span>
<span class="t" style="left:539.09px;top:527.00px;font-size:10px;line-height:12px;color:#0000ff;font-family:'Liberation Mono',monospace;letter-spacing:0.053px;">;</span>
<span class="t" style="left:296.80px;top:539.00px;font-size:10px;line-height:12px;color:#808080;font-family:'Liberation Mono',monospace;">28</span>
<span class="t" style="left:327.20px;top:539.00px;font-size:10px;line-height:12px;color:#0000ff;font-weight:bold;font-family:'Liberation Mono',monospace;letter-spacing:0.053px;">SELECT CONSTRAINT_NAME</span>
<span class="t" style="left:460.39px;top:539.00px;font-size:10px;line-height:12px;color:#0000ff;font-family:'Liberation Mono',monospace;letter-spacing:0.053px;">,</span>
<span class="t" style="left:472.50px;top:539.00px;font-size:10px;line-height:12px;color:#808000;font-family:'Liberation Mono',monospace;letter-spacing:0.053px;">CHECK_CLAUSE</span>
<span class="t" style="left:551.20px;top:539.00px;font-size:10px;line-height:12px;color:#0000ff;font-weight:bold;font-family:'Liberation Mono',monospace;letter-spacing:0.053px;">FROM</span>
<span class="t" style="left:581.47px;top:539.00px;font-size:10px;line-height:12px;color:#808000;font-family:'Liberation Mono',monospace;letter-spacing:0.053px;">`information_schema`</span>
<span class="t" style="left:702.55px;top:539.00px;font-size:10px;line-height:12px;color:#0000ff;font-family:'Liberation Mono',monospace;letter-spacing:0.053px;">.</span>
<span class="t" style="left:708.60px;top:539.00px;font-size:10px;line-height:12px;color:#808000;font-family:'Liberation Mono',monospace;letter-spacing:0.053px;">`CHECK_CONSTRAINTS`</span>
<span class="t" style="left:829.68px;top:539.00px;font-size:10px;line-height:12px;color:#0000ff;font-weight:bold;font-family:'Liberation Mono',monospace;letter-spacing:0.053px;">WHERE CONSTRAINT_SCHEMA</span>
<span class="t" style="left:968.92px;top:539.00px;font-size:10px;line-height:12px;color:#0000ff;font-family:'Liberation Mono',monospace;letter-spacing:0.053px;">=</span>
<span class="t" style="left:974.98px;top:539.00px;font-size:10px;line-height:12px;color:#008000;font-family:'Liberation Mono',monospace;letter-spacing:0.053px;">&#x27;MyDB&#x27;</span>
<span class="t" style="left:1017.36px;top:539.00px;font-size:10px;line-height:12px;color:#0000ff;font-weight:bold;font-family:'Liberation Mono',monospace;letter-spacing:0.053px;">AND TABLE_NAME</span>
<span class="t" style="left:1102.11px;top:539.00px;font-size:10px;line-height:12px;color:#0000ff;font-family:'Liberation Mono',monospace;letter-spacing:0.053px;">=</span>
<span class="t" style="left:1108.17px;top:539.00px;font-size:10px;line-height:12px;color:#008000;font-family:'Liberation Mono',monospace;letter-spacing:0.053px;">&#x27;t_sensor&#x27;</span>
<span class="t" style="left:296.80px;top:551.00px;font-size:10px;line-height:12px;color:#808080;font-family:'Liberation Mono',monospace;">29</span>
<span class="t" style="left:327.20px;top:551.00px;font-size:10px;line-height:12px;color:#0000ff;font-weight:bold;font-family:'Liberation Mono',monospace;letter-spacing:0.053px;">SELECT</span>
<span class="t" style="left:375.63px;top:551.00px;font-size:10px;line-height:12px;color:#808000;font-family:'Liberation Mono',monospace;letter-spacing:0.053px;">`id`</span>
<span class="t" style="left:399.85px;top:551.00px;font-size:10px;line-height:12px;color:#0000ff;font-family:'Liberation Mono',monospace;letter-spacing:0.053px;">,</span>
<span class="t" style="left:411.96px;top:551.00px;font-size:10px;line-height:12px;color:#000080;font-weight:bold;font-family:'Liberation Mono',monospace;letter-spacing:0.053px;">LEFT</span>
<span class="t" style="left:436.17px;top:551.00px;font-size:10px;line-height:12px;color:#0000ff;font-family:'Liberation Mono',monospace;letter-spacing:0.053px;">(</span>
<span class="t" style="left:442.23px;top:551.00px;font-size:10px;line-height:12px;color:#808000;font-family:'Liberation Mono',monospace;letter-spacing:0.053px;">`Sensor_Name`</span>
<span class="t" style="left:520.93px;top:551.00px;font-size:10px;line-height:12px;color:#0000ff;font-family:'Liberation Mono',monospace;letter-spacing:0.053px;">,</span>
<span class="t" style="left:533.04px;top:551.00px;font-size:10px;line-height:12px;color:#800080;font-family:'Liberation Mono',monospace;letter-spacing:0.053px;">256</span>
<span class="t" style="left:551.20px;top:551.00px;font-size:10px;line-height:12px;color:#0000ff;font-family:'Liberation Mono',monospace;letter-spacing:0.053px;">),</span>
<span class="t" style="left:575.41px;top:551.00px;font-size:10px;line-height:12px;color:#808000;font-family:'Liberation Mono',monospace;letter-spacing:0.053px;">`Sensor_Value`</span>
<span class="t" style="left:660.17px;top:551.00px;font-size:10px;line-height:12px;color:#0000ff;font-family:'Liberation Mono',monospace;letter-spacing:0.053px;">,</span>
<span class="t" style="left:672.28px;top:551.00px;font-size:10px;line-height:12px;color:#000080;font-weight:bold;font-family:'Liberation Mono',monospace;letter-spacing:0.053px;">LEFT</span>
<span class="t" style="left:696.49px;top:551.00px;font-size:10px;line-height:12px;color:#0000ff;font-family:'Liberation Mono',monospace;letter-spacing:0.053px;">(</span>
<span class="t" style="left:702.55px;top:551.00px;font-size:10px;line-height:12px;color:#808000;font-family:'Liberation Mono',monospace;letter-spacing:0.053px;">`Sensor_Measure`</span>
<span class="t" style="left:799.41px;top:551.00px;font-size:10px;line-height:12px;color:#0000ff;font-family:'Liberation Mono',monospace;letter-spacing:0.053px;">,</span>
<span class="t" style="left:811.52px;top:551.00px;font-size:10px;line-height:12px;color:#800080;font-family:'Liberation Mono',monospace;letter-spacing:0.053px;">256</span>
<span class="t" style="left:829.68px;top:551.00px;font-size:10px;line-height:12px;color:#0000ff;font-family:'Liberation Mono',monospace;letter-spacing:0.053px;">),</span>
<span class="t" style="left:847.84px;top:551.00px;font-size:10px;line-height:12px;color:#000080;font-weight:bold;font-family:'Liberation Mono',monospace;letter-spacing:0.053px;">LEFT</span>
<span class="t" style="left:872.06px;top:551.00px;font-size:10px;line-height:12px;color:#0000ff;font-family:'Liberation Mono',monospace;letter-spacing:0.053px;">(</span>
<span class="t" style="left:878.11px;top:551.00px;font-size:10px;line-height:12px;color:#808000;font-family:'Liberation Mono',monospace;letter-spacing:0.053px;">`Sensor_DATE_TIME`</span>
<span class="t" style="left:987.09px;top:551.00px;font-size:10px;line-height:12px;color:#0000ff;font-family:'Liberation Mono',monospace;letter-spacing:0.053px;">,</span>
<span class="t" style="left:999.19px;top:551.00px;font-size:10px;line-height:12px;color:#800080;font-family:'Liberation Mono',monospace;letter-spacing:0.053px;">256</span>
<span class="t" style="left:1017.36px;top:551.00px;font-size:10px;line-height:12px;color:#0000ff;font-family:'Liberation Mono',monospace;letter-spacing:0.053px;">)</span>
<span class="t" style="left:1029.46px;top:551.00px;font-size:10px;line-height:12px;color:#0000ff;font-weight:bold;font-family:'Liberation Mono',monospace;letter-spacing:0.053px;">FROM</span>
<span class="t" style="left:1059.73px;top:551.00px;font-size:10px;line-height:12px;color:#808000;font-family:'Liberation Mono',monospace;letter-spacing:0.053px;">`MyDB`</span>
<span class="t" style="left:1096.06px;top:551.00px;font-size:10px;line-height:12px;color:#0000ff;font-family:'Liberation Mono',monospace;letter-spacing:0.053px;">.</span>
<span class="t" style="left:1102.11px;top:551.00px;font-size:10px;line-height:12px;color:#808000;font-family:'Liberation Mono',monospace;letter-spacing:0.053px;">`t_sensor`</span>
</div>
<div class="g statusbar">
<div class="b" style="left:283.5px;top:569px;width:900.5px;height:16px;background:#f0f0f0;"></div>
<div class="b" style="left:448.5px;top:571px;width:1px;height:14px;background:#dcdcdc;"></div>
<div class="b" style="left:540.5px;top:571px;width:1px;height:14px;background:#dcdcdc;"></div>
<div class="b" style="left:632.5px;top:571px;width:1px;height:14px;background:#dcdcdc;"></div>
<div class="b" style="left:770.5px;top:571px;width:1px;height:14px;background:#dcdcdc;"></div>
<div class="b" style="left:908.5px;top:571px;width:1px;height:14px;background:#dcdcdc;"></div>
<div class="b" style="left:1000.5px;top:571px;width:1px;height:14px;background:#dcdcdc;"></div>
<span class="t r" style="left:453.00px;top:572.00px;font-size:10.6px;line-height:13px;color:#111;transform:scaleX(0.8977);">r1 : c4 (16 B)</span>
<svg class="i clock" style="left:544px;top:571.5px" width="13" height="13" viewBox="544 571.5 13 13"><circle cx="550.5" cy="578.0" r="5.6" fill="#fff" stroke="#26b3c7" stroke-width="1.5"/><path d="M550.5 574.6V578.3l2.2 1.8" stroke="#444" stroke-width="1" fill="none"/></svg>
<span class="t r" style="left:560.00px;top:572.00px;font-size:10.6px;line-height:13px;color:#111;transform:scaleX(0.9852);">Подключено: 0</span>
<svg class="i seal" style="left:636px;top:572.6px" width="14" height="10" viewBox="636 572.6 14 10"><g transform="translate(636 572.6) scale(1.0)"><path d="M0 8.3C2 7.6 4.5 6.6 6.5 5.2C8.3 4 9.6 2.2 11 0.9C11.8 0.2 13 0 13.9 0.6L13.2 1.5C12.6 2.6 12.2 4 11.6 5.4C11.3 6.3 11.4 7.4 11.8 8.6L10.4 8.6L9.8 7.2C9 7.6 8.2 7.8 7.4 7.9L8.2 9L6.4 9L5.6 8C3.8 8.4 1.8 8.8 0.2 9Z" fill="#c0694a"/><path d="M10 7.1L11.3 6.4L11.5 8.1L10.5 8.4Z" fill="#1f305f"/></g></svg>
<span class="t r" style="left:652.00px;top:572.00px;font-size:10.6px;line-height:13px;color:#111;transform:scaleX(0.9114);">MariaDB 10.2.44</span>
<div class="b clip" style="left:774px;top:569px;width:134.3px;height:18px;overflow:hidden;"><span class="t r" style="left:0.50px;top:2.00px;font-size:10.6px;line-height:13px;color:#111;transform:scaleX(0.9400);">Время работы: 4525 дней, 06</span></div>
<svg class="i clock" style="left:912px;top:571.5px" width="13" height="13" viewBox="912 571.5 13 13"><circle cx="918.5" cy="578.0" r="5.6" fill="#fff" stroke="#26b3c7" stroke-width="1.5"/><path d="M918.5 574.6V578.3l2.2 1.8" stroke="#444" stroke-width="1" fill="none"/></svg>
<div class="b clip" style="left:927px;top:569px;width:73.2px;height:18px;overflow:hidden;"><span class="t r" style="left:1.00px;top:2.00px;font-size:10.6px;line-height:13px;color:#111;transform:scaleX(0.9202);">Серверное врем</span></div>
<svg class="i wait" style="left:1003px;top:571.5px" width="14" height="14" viewBox="1003 571.5 14 14"><circle cx="1010.0" cy="578.5" r="6.1" fill="#fdfaff" stroke="#a43cb8" stroke-width="1.3"/></svg>
<span class="t r" style="left:1019.30px;top:572.00px;font-size:10.6px;line-height:13px;color:#111;transform:scaleX(0.9582);">Ожидание.</span>
<svg class="i sizegrip" style="left:1176px;top:577px" width="8" height="8" viewBox="1176 577 8 8"><rect x="1181.2" y="577.0" width="1.4" height="1.4" fill="#b5b5b5"/><rect x="1178.6" y="579.6" width="1.4" height="1.4" fill="#b5b5b5"/><rect x="1181.2" y="579.6" width="1.4" height="1.4" fill="#b5b5b5"/><rect x="1176.0" y="582.2" width="1.4" height="1.4" fill="#b5b5b5"/><rect x="1178.6" y="582.2" width="1.4" height="1.4" fill="#b5b5b5"/><rect x="1181.2" y="582.2" width="1.4" height="1.4" fill="#b5b5b5"/></svg>
</div>
</div>
<div class="g callouts">
<svg class="i" style="left:0;top:0" width="1188" height="589" viewBox="0 0 1188 589" fill="none" stroke="#0e2446" stroke-width="1.9" stroke-linejoin="miter"><path d="M692 10.8H642.6L691.5 91"/><path d="M692 2V35.5" stroke-width="2"/><path d="M205.4 254.2H239.4L296 161.6"/><path d="M205.4 234.2V325" stroke-width="2"/><path d="M659.7 299.6H603.6L596.9 151"/><path d="M659.7 285.2V344" stroke-width="2"/></svg>
<div class="b" style="left:699px;top:1px;width:258px;height:35px;background:#fff;border:2px solid #0e2446;"></div>
<div class="g line"><span class="t r" style="left:711.10px;top:6.00px;font-size:20.8px;line-height:25px;color:#0e2446;letter-spacing:0.124px;">Выполнить</span> <span class="t r" style="left:829.30px;top:6.00px;font-size:20.8px;line-height:25px;color:#0e2446;letter-spacing:-0.373px;">SQL-запрос</span></div>
<div class="b" style="left:3px;top:233px;width:194px;height:93px;background:#fff;border:2px solid #0e2446;"></div>
<div class="g line"><span class="t r" style="left:14.10px;top:241.00px;font-size:20.8px;line-height:25px;color:#0e2446;letter-spacing:-0.730px;">База</span> <span class="t r" style="left:66.30px;top:241.00px;font-size:20.8px;line-height:25px;color:#0e2446;letter-spacing:0.334px;">данных</span></div>
<div class="g line"><span class="t r" style="left:14.10px;top:266.00px;font-size:20.8px;line-height:25px;color:#0e2446;letter-spacing:-1.074px;">MyDB</span> <span class="t r" style="left:75.50px;top:266.00px;font-size:20.8px;line-height:25px;color:#0e2446;">и</span> <span class="t r" style="left:93.20px;top:266.00px;font-size:20.8px;line-height:25px;color:#0e2446;letter-spacing:-0.130px;">таблица</span></div>
<div class="g line"><span class="t r" style="left:14.10px;top:291.00px;font-size:20.8px;line-height:25px;color:#0e2446;letter-spacing:-0.154px;">t_sensor</span></div>
<div class="b" style="left:668px;top:284px;width:289px;height:61px;background:#fff;border:2px solid #0e2446;"></div>
<div class="g line"><span class="t r" style="left:678.50px;top:289.00px;font-size:20.8px;line-height:25px;color:#0e2446;letter-spacing:0.034px;">Запрос</span> <span class="t r" style="left:756.00px;top:289.00px;font-size:20.8px;line-height:25px;color:#0e2446;letter-spacing:-1.955px;">на</span> <span class="t r" style="left:785.50px;top:289.00px;font-size:20.8px;line-height:25px;color:#0e2446;letter-spacing:0.272px;">отображение</span></div>
<div class="g line"><span class="t r" style="left:678.50px;top:315.00px;font-size:20.8px;line-height:25px;color:#0e2446;letter-spacing:0.373px;">кириллических</span> <span class="t r" style="left:837.70px;top:315.00px;font-size:20.8px;line-height:25px;color:#0e2446;letter-spacing:0.652px;">символов</span></div>
</div>
<div class="b hl" style="left:680.9px;top:90px;width:32.3px;height:25.8px;border:3px solid #ff0000;"></div>
<div class="b hl" style="left:895.2px;top:111.2px;width:73.8px;height:25.4px;border:3px solid #ff0000;"></div>
</body></html>
